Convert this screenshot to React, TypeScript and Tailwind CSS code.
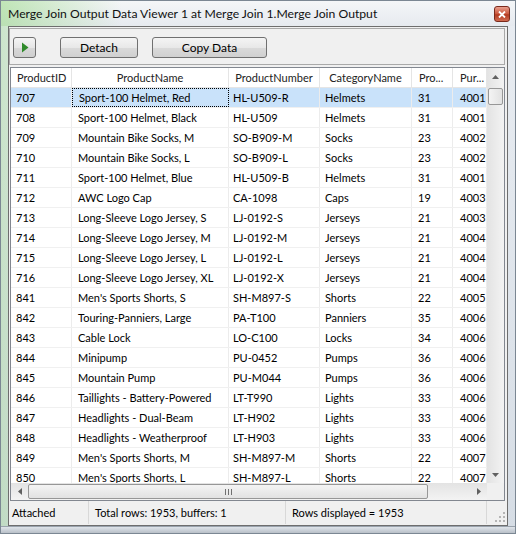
import React from "react";

const rows: [string, string, string, string, string, string][] = [
  ["707", "Sport-100 Helmet, Red", "HL-U509-R", "Helmets", "31", "4001"],
  ["708", "Sport-100 Helmet, Black", "HL-U509", "Helmets", "31", "4001"],
  ["709", "Mountain Bike Socks, M", "SO-B909-M", "Socks", "23", "4002"],
  ["710", "Mountain Bike Socks, L", "SO-B909-L", "Socks", "23", "4002"],
  ["711", "Sport-100 Helmet, Blue", "HL-U509-B", "Helmets", "31", "4001"],
  ["712", "AWC Logo Cap", "CA-1098", "Caps", "19", "4003"],
  ["713", "Long-Sleeve Logo Jersey, S", "LJ-0192-S", "Jerseys", "21", "4003"],
  ["714", "Long-Sleeve Logo Jersey, M", "LJ-0192-M", "Jerseys", "21", "4004"],
  ["715", "Long-Sleeve Logo Jersey, L", "LJ-0192-L", "Jerseys", "21", "4004"],
  ["716", "Long-Sleeve Logo Jersey, XL", "LJ-0192-X", "Jerseys", "21", "4004"],
  ["841", "Men's Sports Shorts, S", "SH-M897-S", "Shorts", "22", "4005"],
  ["842", "Touring-Panniers, Large", "PA-T100", "Panniers", "35", "4006"],
  ["843", "Cable Lock", "LO-C100", "Locks", "34", "4006"],
  ["844", "Minipump", "PU-0452", "Pumps", "36", "4006"],
  ["845", "Mountain Pump", "PU-M044", "Pumps", "36", "4006"],
  ["846", "Taillights - Battery-Powered", "LT-T990", "Lights", "33", "4006"],
  ["847", "Headlights - Dual-Beam", "LT-H902", "Lights", "33", "4006"],
  ["848", "Headlights - Weatherproof", "LT-H903", "Lights", "33", "4006"],
  ["849", "Men's Sports Shorts, M", "SH-M897-M", "Shorts", "22", "4007"],
  ["850", "Men's Sports Shorts, L", "SH-M897-L", "Shorts", "22", "4007"],
];

const colW = ["w-[61px]", "w-[157px]", "w-[91px]", "w-[92px]", "w-[41px]", "w-[34px]"];
const pads = ["pl-[5px]", "pl-[6px]", "pl-[4px]", "pl-[5px]", "pl-[6px]", "pl-[7px]"];

export default function App() {
  return (
    <div
      className="w-[516px] h-[534px] flex flex-col overflow-hidden bg-[linear-gradient(90deg,rgba(150,215,130,0.35),rgba(240,243,246,0)_40px),linear-gradient(180deg,#e9edf2,#d6dde5)] border border-[#7b8793] text-[11px] text-black"
      style={{ fontFamily: "Lato, 'Liberation Sans', sans-serif" }}
    >
      {/* Title bar */}
      <div className="h-[25px] flex items-center justify-between pl-[7px] pr-[5px] bg-[linear-gradient(90deg,rgba(150,215,130,0.55),rgba(240,243,246,0)_120px),linear-gradient(180deg,#f4f6f8,#e6eaef)]">
        <span className="text-[12.2px] text-[#111] pt-[2px]">
          Merge Join Output Data Viewer 1 at Merge Join 1.Merge Join Output
        </span>
        <div className="w-[16px] h-[16px] mt-[1px] rounded-[3px] border border-[#7a2a1c] bg-[linear-gradient(180deg,#e9a08e,#c9543a_50%,#b23a20_55%,#d06a50)] flex items-center justify-center">
          <svg width="8" height="7" viewBox="0 0 8 7">
            <path d="M1 0.5 L7 6.5 M7 0.5 L1 6.5" stroke="#fff" strokeWidth="1.8" />
          </svg>
        </div>
      </div>

      <div className="flex flex-1">
        <div className="w-[7px]" />
        {/* client */}
        <div className="w-[500px] h-[500px] border border-[#6e6e6e] bg-[#f0f0f0] flex flex-col">
          {/* toolbar */}
          <div className="mt-[1px] ml-[0px] w-[496px] h-[37px] border border-[#a9a9a9] flex items-start pt-[8px] pl-[3px]">
            <button className="w-[23px] h-[21px] rounded-[3px] border border-[#707070] bg-[linear-gradient(180deg,#f4f4f4,#e6e6e6_50%,#d8d8d8_51%,#cfcfcf)] flex items-center justify-center">
              <svg width="8" height="11" viewBox="0 0 8 11">
                <path d="M1 0.5 L7.5 5.5 L1 10.5 Z" fill="#2f8a2a" />
              </svg>
            </button>
            <button className="ml-[24px] w-[78px] h-[21px] rounded-[3px] border border-[#707070] bg-[linear-gradient(180deg,#f4f4f4,#e8e8e8_50%,#dadada_51%,#d0d0d0)] text-[12px] leading-none">
              Detach
            </button>
            <button className="ml-[14px] w-[115px] h-[21px] rounded-[3px] border border-[#707070] bg-[linear-gradient(180deg,#f4f4f4,#e8e8e8_50%,#dadada_51%,#d0d0d0)] text-[12px] leading-none">
              Copy Data
            </button>
          </div>

          {/* grid */}
          <div className="mt-[2px] ml-[1px] w-[495px] h-[434px] border border-[#828790] bg-white flex flex-col">
            <div className="flex h-[415px]">
              <div className="w-[476px] overflow-hidden flex flex-col">
                {/* header */}
                <div className="flex h-[20px] shrink-0 border-b border-[#e5e5e5]">
                  {[
                    ["ProductID", "justify-start pl-[6px]"],
                    ["ProductName", "justify-center"],
                    ["ProductNumber", "justify-center"],
                    ["CategoryName", "justify-center"],
                    ["Pro...", "justify-start pl-[7px]"],
                    ["Pur...", "justify-start pl-[7px]"],
                  ].map(([t, a], i) => (
                    <div
                      key={i}
                      className={`${colW[i]} shrink-0 flex items-center pt-[1px] ${a} border-r border-[#e5e5e5] text-[#222] whitespace-nowrap overflow-hidden`}
                    >
                      {t}
                    </div>
                  ))}
                </div>
                {rows.map((r, ri) => (
                  <div
                    key={ri}
                    className={`flex h-[20px] shrink-0 border-b border-[#f0f0f0] ${ri === 0 ? "bg-[#c9e2fa]" : ""}`}
                  >
                    {r.map((c, ci) => (
                      <div
                        key={ci}
                        className={`${colW[ci]} shrink-0 flex items-center pt-[1px] ${pads[ci]} border-r border-[#ececec] whitespace-nowrap overflow-hidden ${
                          ri === 0 && ci === 1 ? "border border-dotted border-black" : ""
                        }`}
                      >
                        {c}
                      </div>
                    ))}
                  </div>
                ))}
              </div>
              {/* vertical scrollbar */}
              <div className="w-[17px] bg-[linear-gradient(90deg,#e3e3e3,#f3f3f3)] flex flex-col items-center">
                <div className="h-[17px] w-full flex items-center justify-center">
                  <svg width="7" height="4" viewBox="0 0 7 4"><path d="M0 4 L3.5 0 L7 4 Z" fill="#606060" /></svg>
                </div>
                <div className="mt-[3px] w-[15px] h-[17px] rounded-[2px] border border-[#979797] bg-[linear-gradient(90deg,#f4f4f4,#e2e2e2)]" />
                <div className="flex-1" />
                <div className="h-[17px] w-full flex items-center justify-center">
                  <svg width="7" height="4" viewBox="0 0 7 4"><path d="M0 0 L3.5 4 L7 0 Z" fill="#606060" /></svg>
                </div>
              </div>
            </div>
            {/* horizontal scrollbar */}
            <div className="flex h-[17px] bg-[linear-gradient(180deg,#e3e3e3,#f3f3f3)]">
              <div className="w-[17px] flex items-center justify-center">
                <svg width="4" height="7" viewBox="0 0 4 7"><path d="M4 0 L0 3.5 L4 7 Z" fill="#606060" /></svg>
              </div>
              <div className="ml-[0px] mt-[1px] w-[400px] h-[15px] rounded-[2px] border border-[#979797] bg-[linear-gradient(180deg,#f4f4f4,#e2e2e2)] flex items-center justify-center">
                <svg width="7" height="6" viewBox="0 0 7 6">
                  <path d="M0.5 0 V6 M3.5 0 V6 M6.5 0 V6" stroke="#707070" strokeWidth="1" />
                </svg>
              </div>
              <div className="flex-1" />
              <div className="w-[17px] flex items-center justify-center">
                <svg width="4" height="7" viewBox="0 0 4 7"><path d="M0 0 L4 3.5 L0 7 Z" fill="#606060" /></svg>
              </div>
              <div className="w-[17px] bg-[#f0f0f0]" />
            </div>
          </div>

          {/* status bar */}
          <div className="h-[23px] flex items-center text-[11px]">
            <div className="w-[80px] h-full flex items-center pt-[1px] pl-[3px] border-r border-[#d8d8d8]">Attached</div>
            <div className="w-[197px] h-full flex items-center pt-[1px] pl-[6px] border-r border-[#d8d8d8]">Total rows: 1953, buffers: 1</div>
            <div className="w-[201px] h-full flex items-center pt-[1px] pl-[6px] border-r border-[#d8d8d8]">Rows displayed = 1953</div>
            <div className="flex-1 h-full flex items-end justify-end pr-[2px] pb-[2px]">
              <svg width="10" height="10" viewBox="0 0 10 10" fill="#b5b5b5">
                <rect x="8" y="0" width="2" height="2" />
                <rect x="4" y="4" width="2" height="2" />
                <rect x="8" y="4" width="2" height="2" />
                <rect x="0" y="8" width="2" height="2" />
                <rect x="4" y="8" width="2" height="2" />
                <rect x="8" y="8" width="2" height="2" />
              </svg>
            </div>
          </div>
        </div>
        <div className="w-[7px]" />
      </div>
      <div className="h-[7px] border-t border-[#9aa3ad] bg-[linear-gradient(180deg,#dfe4ea,#b9c0c8)]" />
    </div>
  );
}
